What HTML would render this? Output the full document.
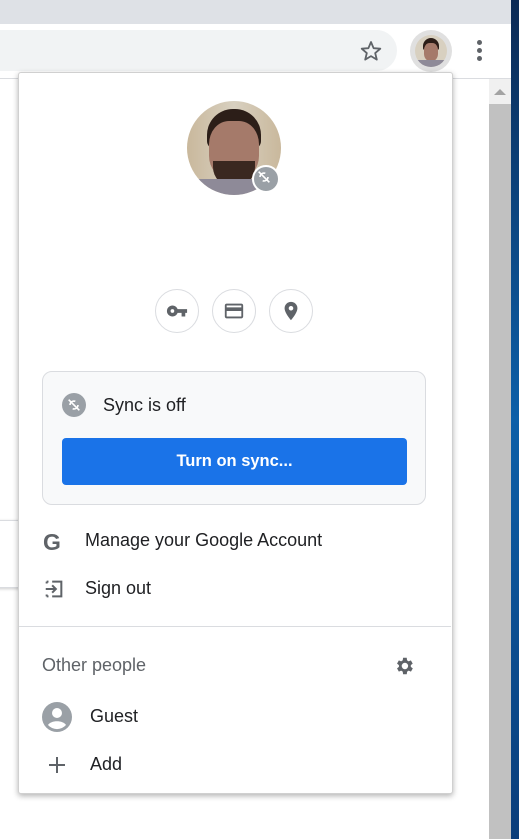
<!DOCTYPE html>
<html><head><style>
body{margin:0;width:519px;height:839px;overflow:hidden;background:#fff;font-family:"Liberation Sans",Arial,sans-serif;position:relative}
.a{position:absolute}
.t{font-size:18px;color:#202124}
</style></head><body>
<div class="a" style="left:0;top:0;width:511px;height:24px;background:#dee1e6"></div>
<div class="a" style="left:-30px;top:30px;width:427px;height:41px;background:#f1f3f4;border-radius:21px"></div>
<svg class="a" style="left:359px;top:39px" width="24" height="24" viewBox="0 0 24 24"><path d="M12 3l2.6 6.2 6.7.5-5.1 4.4 1.6 6.5L12 17.1 6.2 20.6l1.6-6.5L2.7 9.7l6.7-.5z" fill="none" stroke="#5f6368" stroke-width="1.8" stroke-linejoin="round"/></svg>
<div class="a" style="left:410px;top:30px;width:42px;height:42px;border-radius:50%;background:#e0e0e0"></div>
<div class="a" style="left:415px;top:35px;width:32px;height:32px;border-radius:50%;overflow:hidden;background:#d8d0c0">
<div class="a" style="left:8px;top:3px;width:16px;height:12px;border-radius:8px 8px 2px 2px;background:#2c1e18"></div>
<div class="a" style="left:9px;top:8px;width:14px;height:18px;border-radius:40%;background:#a57a6a"></div>
<div class="a" style="left:0;top:25px;width:32px;height:8px;background:#8e8a98"></div>
</div>
<div class="a" style="left:477px;top:40px;width:5px;height:5px;border-radius:50%;background:#5f6368;box-shadow:0 8px 0 #5f6368,0 16px 0 #5f6368"></div>
<div class="a" style="left:0;top:78px;width:511px;height:1px;background:#dadce0"></div>
<div class="a" style="left:489px;top:79px;width:22px;height:760px;background:#c1c1c1"></div>
<div class="a" style="left:489px;top:79px;width:22px;height:25px;background:#f0f0f0"></div>
<div class="a" style="left:494px;top:89px;width:0;height:0;border-left:6px solid transparent;border-right:6px solid transparent;border-bottom:6px solid #a3a3a3"></div>
<div class="a" style="left:511px;top:0;width:8px;height:839px;background:linear-gradient(#0b2a55,#0c5fa8 50%,#0a3d7a)"></div>
<div class="a" style="left:-5px;top:520px;width:23px;height:66px;background:#fff;border:1px solid #dadce0;box-shadow:0 1px 3px rgba(0,0,0,.2)"></div>

<div class="a" style="left:18px;top:72px;width:433px;height:720px;background:#fff;border:1px solid #d0d0d0;border-radius:3px;box-shadow:0 2px 6px rgba(0,0,0,.3)"></div>
<div class="a" style="left:187px;top:101px;width:94px;height:94px;border-radius:50%;overflow:hidden;background:linear-gradient(90deg,#c9b89c,#d8d0c0 50%,#c9b89c)">
<div class="a" style="left:20px;top:8px;width:54px;height:40px;border-radius:26px 26px 8px 8px;background:#2c1e18"></div>
<div class="a" style="left:22px;top:20px;width:50px;height:58px;border-radius:40%;background:#a57a6a"></div>
<div class="a" style="left:26px;top:60px;width:42px;height:26px;border-radius:0 0 20px 20px;background:#3a2820"></div>
<div class="a" style="left:0;top:78px;width:94px;height:20px;background:#8e8a98"></div>
</div>
<div class="a" style="left:252px;top:165px;width:24px;height:24px;border-radius:50%;background:#9aa0a6;border:2px solid #fff"></div>
<svg class="a" style="left:256px;top:169px" width="16" height="16" viewBox="0 0 24 24"><path d="M4 4l16 16M6 12a6 6 0 0 1 8-5.6M18 12a6 6 0 0 1-8 5.6" stroke="#fff" stroke-width="2.4" fill="none"/></svg>

<div class="a" style="left:155px;top:289px;width:42px;height:42px;border:1px solid #dadce0;border-radius:50%"></div>
<div class="a" style="left:212px;top:289px;width:42px;height:42px;border:1px solid #dadce0;border-radius:50%"></div>
<div class="a" style="left:269px;top:289px;width:42px;height:42px;border:1px solid #dadce0;border-radius:50%"></div>
<svg class="a" style="left:166px;top:300px" width="22" height="22" viewBox="0 0 24 24"><path fill="#5f6368" d="M12.65 10A6 6 0 1 0 12.65 14H17v4h4v-4h2v-4zM7 14a2 2 0 1 1 0-4 2 2 0 0 1 0 4z"/></svg>
<svg class="a" style="left:223px;top:300px" width="22" height="22" viewBox="0 0 24 24"><path fill="#5f6368" d="M20 4H4c-1.1 0-2 .9-2 2v12c0 1.1.9 2 2 2h16c1.1 0 2-.9 2-2V6c0-1.1-.9-2-2-2zm0 14H4v-6h16zm0-10H4V6h16z"/></svg>
<svg class="a" style="left:280px;top:300px" width="22" height="22" viewBox="0 0 24 24"><path fill="#5f6368" d="M12 2a7 7 0 0 0-7 7c0 5.25 7 13 7 13s7-7.75 7-13a7 7 0 0 0-7-7zm0 9.5a2.5 2.5 0 1 1 0-5 2.5 2.5 0 0 1 0 5z"/></svg>

<div class="a" style="left:42px;top:371px;width:382px;height:132px;background:#f8f9fa;border:1px solid #dadce0;border-radius:10px"></div>
<div class="a" style="left:62px;top:393px;width:24px;height:24px;border-radius:50%;background:#9aa0a6"></div>
<svg class="a" style="left:66px;top:397px" width="16" height="16" viewBox="0 0 24 24"><path d="M4 4l16 16M6 12a6 6 0 0 1 8-5.6M18 12a6 6 0 0 1-8 5.6" stroke="#fff" stroke-width="2.4" fill="none"/></svg>
<div class="a t" style="left:103px;top:395px">Sync is off</div>
<div class="a" style="left:62px;top:438px;width:345px;height:47px;background:#1a73e8;border-radius:4px;color:#fff;font-weight:bold;font-size:16.5px;line-height:47px;text-align:center">Turn on sync...</div>

<div class="a" style="left:43px;top:529px;font-size:23px;font-weight:bold;color:#5f6368">G</div>
<div class="a t" style="left:85px;top:530px">Manage your Google Account</div>
<svg class="a" style="left:43px;top:578px" width="22" height="22" viewBox="0 0 24 24"><path d="M10 4H20V20H10M4 6V4h0M4 18v2M4 4h2M4 20h2M3 12h11M10 8l4 4-4 4" fill="none" stroke="#5f6368" stroke-width="2.2"/></svg>
<div class="a t" style="left:85px;top:578px">Sign out</div>
<div class="a" style="left:19px;top:626px;width:432px;height:1px;background:#dadce0"></div>
<div class="a" style="left:42px;top:655px;font-size:18px;color:#5f6368">Other people</div>
<svg class="a" style="left:393px;top:655px" width="22" height="22" viewBox="0 0 24 24"><path fill="#5f6368" d="M19.4 13a7.5 7.5 0 0 0 0-2l2.1-1.6-2-3.5-2.5 1a7.5 7.5 0 0 0-1.7-1L15 3h-4l-.4 2.9a7.5 7.5 0 0 0-1.7 1l-2.5-1-2 3.5L6.5 11a7.5 7.5 0 0 0 0 2l-2.1 1.6 2 3.5 2.5-1a7.5 7.5 0 0 0 1.7 1L11 21h4l.4-2.9a7.5 7.5 0 0 0 1.7-1l2.5 1 2-3.5zM13 15.5a3.5 3.5 0 1 1 0-7 3.5 3.5 0 0 1 0 7z"/></svg>
<svg class="a" style="left:42px;top:702px" width="30" height="30" viewBox="0 0 30 30"><circle cx="15" cy="15" r="15" fill="#9aa0a6"/><circle cx="15" cy="11" r="5" fill="#fff"/><path d="M6 23c3-5 15-5 18 0a12 12 0 0 1-18 0z" fill="#fff"/></svg>
<div class="a t" style="left:90px;top:706px">Guest</div>
<svg class="a" style="left:47px;top:755px" width="20" height="20" viewBox="0 0 20 20"><path d="M10 2v16M2 10h16" stroke="#5f6368" stroke-width="2"/></svg>
<div class="a t" style="left:90px;top:754px">Add</div>
</body></html>
